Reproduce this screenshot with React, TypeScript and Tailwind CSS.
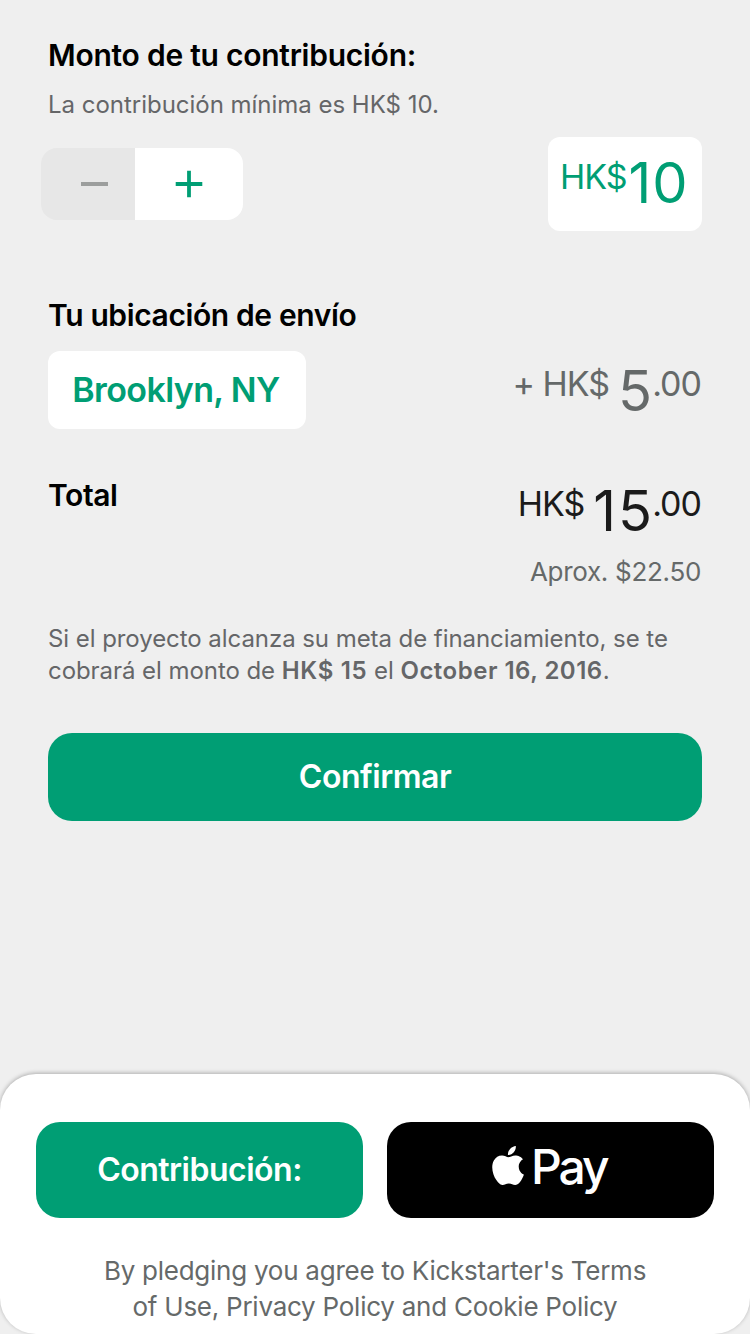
function AppleMark() {
  return (
    <svg className="mt-[2.5px] h-[39px] w-[32px] shrink-0" viewBox="0 124.7 171 211.6" fill="currentColor" aria-hidden="true">
      <path d="M116.9 158.5c-7.5 8.9-19.5 15.9-31.5 14.9-1.5-12 4.4-24.8 11.3-32.6 7.5-9.1 20.6-15.6 31.3-16.1 1.2 12.4-3.7 24.7-11.1 33.8m10.9 17.2c-17.4-1-32.3 9.9-40.5 9.9-8.4 0-21-9.4-34.8-9.1-17.9.3-34.5 10.4-43.6 26.5-18.8 32.3-4.9 80 13.3 106.3 8.9 13 19.5 27.3 33.5 26.8 13.3-.5 18.5-8.6 34.5-8.6 16.1 0 20.8 8.6 34.8 8.4 14.5-.3 23.6-13 32.5-26 10.1-14.8 14.3-29.1 14.5-29.9-.3-.3-28-10.9-28.3-42.9-.3-26.8 21.9-39.5 22.9-40.3-12.5-18.6-32-20.6-38.8-21.1" />
    </svg>
  );
}

export default function App() {
  return (
    <div className="flex h-[1334px] w-[750px] flex-col overflow-hidden bg-[#efefef] font-['Inter',sans-serif] text-black">
      <main className="flex h-[1074px] flex-col px-12 pt-[37px]">
        <h2 className="w-max whitespace-nowrap text-[30px] font-semibold leading-9 tracking-[-0.25px]">Monto de tu contribución:</h2>
        <p className="mt-4 w-max whitespace-nowrap text-[24px] leading-8 tracking-[-0.02px] text-[#656668]">La contribución mínima es HK$ 10.</p>
        <div className="mt-4 flex h-[94px] items-center justify-between">
          <div className="-ml-[7px] flex h-[72px] w-[202px] overflow-hidden rounded-2xl">
            <button aria-label="Reducir" className="flex w-[94px] items-center justify-end bg-[#e7e7e7] pr-[27px]"><span className="h-[4px] w-[27px] bg-[#9c9e9d]" /></button>
            <button aria-label="Aumentar" className="flex flex-1 items-center justify-center bg-white">
              <svg width="28" height="28" viewBox="0 0 28 28" stroke="#009e74" strokeWidth="3.8"><path d="M14 .7V27.3M.7 14H27.3" /></svg>
            </button>
          </div>
          <div className="flex h-[94px] w-[154px] items-start rounded-xl bg-white pl-[12px] text-[#009e74]">
            <span className="mt-[20px] text-[34px] leading-10 tracking-[-1px]">HK$</span>
            <span className="ml-[2px] mt-[14px] text-[56px] leading-[64px] tracking-[1px]">10</span>
          </div>
        </div>
        <h2 className="mt-[66px] w-max whitespace-nowrap text-[30px] font-semibold leading-9 tracking-[-0.38px]">Tu ubicación de envío</h2>
        <div className="mt-[18px] flex h-[78px] justify-between">
          <div className="flex h-[78px] w-[258px] items-center justify-center whitespace-nowrap rounded-xl bg-white pb-px pr-[2px] text-[34px] font-semibold tracking-[-0.6px] text-[#009e74]">Brooklyn, NY</div>
          <div className="mr-px flex whitespace-nowrap text-[34px] leading-10 tracking-[-1px] text-[#656969]"><span className="mt-[13px]">+ HK$</span><span className="ml-[9px] mt-[8px] text-[56px] leading-[64px] tracking-normal">5</span><span className="mt-[13px]">.00</span></div>
        </div>
        <div className="mt-12 flex h-[77px] justify-between">
          <h2 className="text-[30px] font-semibold leading-9 tracking-[-0.4px]">Total</h2>
          <div className="mr-px flex text-[34px] leading-10 tracking-[-1px] text-[#1b1b1b]"><span className="mt-[7px]">HK$</span><span className="ml-[9px] mt-[2px] text-[56px] leading-[64px] tracking-[2px]">15</span><span className="-ml-[2px] mt-[7px]">.00</span></div>
        </div>
        <p className="mr-px self-end text-[26px] leading-9 tracking-[-0.3px] text-[#656969]">Aprox. $22.50</p>
        <div className="mt-[33px] whitespace-nowrap text-[24px] leading-8 tracking-[-0.06px] text-[#656668]">
          <p className="w-max">Si el proyecto alcanza su meta de financiamiento, se te</p>
          <p className="w-max">cobrará el monto de <b className="font-semibold tracking-[0.7px]">HK$ 15</b> el <b className="font-semibold tracking-[0.5px]">October 16, 2016</b>.</p>
        </div>
        <button className="mt-[46px] h-[88px] shrink-0 rounded-3xl bg-[#009e74] text-[32px] font-semibold tracking-[-0.45px] text-white">Confirmar</button>
      </main>
      <footer className="h-[260px] rounded-[36px] bg-white px-9 pt-12 shadow-[0_-1px_4px_rgba(0,0,0,0.28)]">
        <div className="grid grid-cols-2 gap-6">
          <button className="h-24 rounded-3xl bg-[#009e74] text-[32px] font-semibold tracking-[-0.5px] text-white">Contribución:</button>
          <button aria-label="Apple Pay" className="flex h-24 items-start rounded-3xl bg-black pl-[105px] pt-[21px] text-white">
            <AppleMark />
            <span className="ml-[7px] text-[48px] font-medium leading-[48px] tracking-[-3px]">Pay</span>
          </button>
        </div>
        <div className="mt-[35px] whitespace-nowrap text-center text-[26px] leading-9 tracking-[-0.25px] text-[#656969]"><p>By pledging you agree to Kickstarter's Terms</p><p>of Use, Privacy Policy and Cookie Policy</p></div>
      </footer>
    </div>
  );
}
